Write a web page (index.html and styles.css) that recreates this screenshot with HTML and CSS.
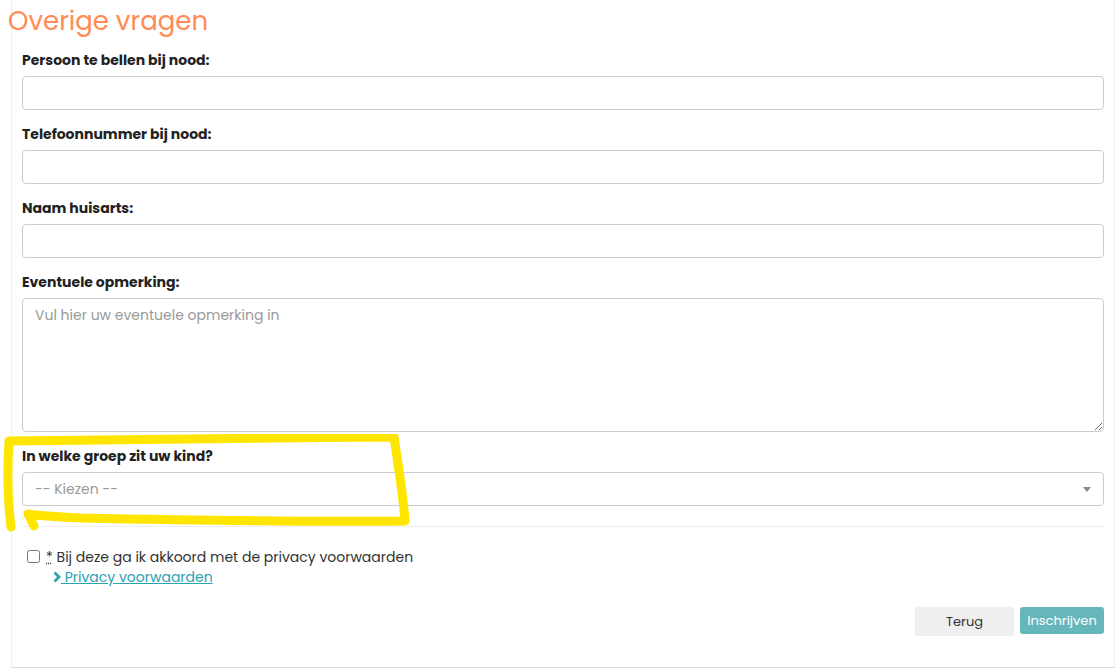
FILE: index.html
```html
<!DOCTYPE html>
<html lang="nl">
<head>
    <meta charset="UTF-8">
    <meta name="viewport" content="width=device-width, initial-scale=1.0">
    <title>Overige vragen</title>
    <link rel="stylesheet" href="styles.css">
</head>
<body>
    <section class="panel">
        <h1 class="panel-title">Overige vragen</h1>

        <div class="field">
            <label for="nood-persoon">Persoon te bellen bij nood:</label>
            <input type="text" id="nood-persoon">
        </div>
        <div class="field">
            <label for="nood-telefoon">Telefoonnummer bij nood:</label>
            <input type="text" id="nood-telefoon">
        </div>
        <div class="field">
            <label for="huisarts">Naam huisarts:</label>
            <input type="text" id="huisarts">
        </div>
        <div class="field">
            <label for="opmerking">Eventuele opmerking:</label>
            <textarea id="opmerking" placeholder="Vul hier uw eventuele opmerking in"></textarea>
        </div>
        <div class="field">
            <label for="groep">In welke groep zit uw kind?</label>
            <div class="select-wrap">
                <select id="groep">
                    <option>-- Kiezen --</option>
                </select>
                <span class="caret"></span>
            </div>
        </div>

        <hr class="divider">

        <div class="privacy">
            <input type="checkbox" id="privacy">
            <div class="privacy-text">
                <label for="privacy"><abbr title="verplicht">*</abbr> Bij deze ga ik akkoord met de privacy voorwaarden</label>
                <a href="#" class="privacy-link">
                    <svg width="8" height="12" viewBox="0 0 8 12"><path d="M1.5 1.5 L6 6 L1.5 10.5" fill="none" stroke="#2aa3b3" stroke-width="2.8"/></svg>
                    Privacy voorwaarden</a>
            </div>
        </div>

        <div class="actions">
            <button class="btn btn-back">Terug</button>
            <button class="btn btn-submit">Inschrijven</button>
        </div>
    </section>

    <!-- markering in de screenshot -->
    <svg class="marker" width="420" height="100" viewBox="0 0 420 100">
        <path d="M9 7 C 120 5, 260 4, 394 3 C 398 30, 403 60, 405 87 C 300 88, 180 86, 80 84 C 60 83, 40 82, 28 80 L 34 92 M 9 7 C 7 40, 8 70, 11 93"
              fill="none" stroke="#ffe600" stroke-width="9" stroke-linecap="round" stroke-linejoin="round"/>
    </svg>
</body>
</html>
```

FILE: styles.css
```css
body {
    margin: 0;
    padding: 0;
    background-color: #fff;
    font-family: "Poppins", "Open Sans", sans-serif;
    color: #333;
}
.panel {
    position: relative;
    width: 1082px;
    margin-left: 11px;
    padding: 0 10px 31px 10px;
    border-left: 1px solid #eee;
    border-right: 1px solid #eee;
    border-bottom: 1px solid #ddd;
}
.panel-title {
    margin: 0 0 8px -14px;
    font-size: 26px;
    line-height: 42px;
    font-weight: 400;
    color: #ff8b55;
}
.field {
    margin-bottom: 14px;
}
.field label {
    display: block;
    font-size: 14px;
    line-height: 21px;
    font-weight: 700;
    color: #222;
    margin-bottom: 5px;
}
.field input,
.field textarea,
.field select {
    display: block;
    width: 100%;
    box-sizing: border-box;
    height: 34px;
    border: 1px solid #ccc;
    border-radius: 4px;
    padding: 6px 12px;
    font-family: inherit;
    font-size: 14px;
    color: #555;
    background-color: #fff;
}
.field textarea {
    height: 134px;
    resize: vertical;
}
.field textarea::placeholder {
    color: #999;
}
.select-wrap {
    position: relative;
}
.field select {
    appearance: none;
    color: #999;
}
.caret {
    position: absolute;
    right: 13px;
    top: 15px;
    width: 0;
    height: 0;
    border-left: 4px solid transparent;
    border-right: 4px solid transparent;
    border-top: 5px solid #888;
}
.divider {
    border: none;
    border-top: 1px solid #eee;
    margin: 20px 0 20px 0;
}
.privacy {
    display: flex;
    align-items: flex-start;
    gap: 6px;
    padding-left: 5px;
    font-size: 14px;
    line-height: 20px;
}
.privacy input {
    margin: 3px 0 0 0;
    width: 13px;
    height: 13px;
}
.privacy-text label {
    color: #333;
}
.privacy-text abbr {
    text-decoration: underline dotted;
    cursor: help;
}
.privacy-link {
    display: block;
    padding-left: 7px;
    color: #2aa3b3;
}
.privacy-link svg {
    vertical-align: -1px;
}
.actions {
    display: flex;
    justify-content: flex-end;
    align-items: flex-start;
    gap: 6px;
    margin-top: 20px;
}
.btn {
    border: none;
    border-radius: 3px;
    font-family: inherit;
    font-size: 13px;
    cursor: pointer;
}
.btn-back {
    width: 99px;
    height: 29px;
    background-color: #efefef;
    color: #333;
}
.btn-submit {
    width: 84px;
    height: 27px;
    background-color: #66b7bc;
    color: #fff;
}
.marker {
    position: absolute;
    left: 0;
    top: 434px;
    pointer-events: none;
}
```
